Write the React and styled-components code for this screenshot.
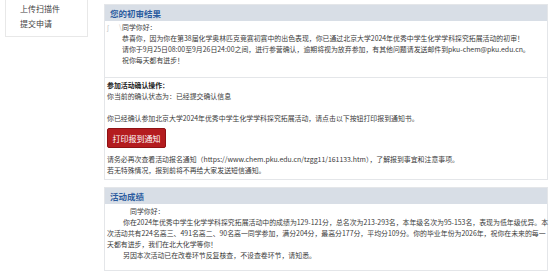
import React from "react";
import styled, { createGlobalStyle } from "styled-components";

const GlobalStyle = createGlobalStyle`
  html, body {
    margin: 0;
    padding: 0;
    background: #ffffff;
  }
  body {
    font-family: "Noto Sans CJK SC", "Noto Sans", sans-serif;
    color: #3a3a3a;
  }
`;

const Page = styled.div`
  display: flex;
  align-items: flex-start;
  width: 550px;
  height: 279px;
  overflow: hidden;
`;

const Sidebar = styled.div`
  width: 81px;
  margin-left: 5px;
  margin-right: 16px;
  padding: 1px 0 5px;
  border: 1px solid #e8e8e8;
  border-top: none;
  background: #fff;
`;

const SideItem = styled.div`
  padding-left: 14px;
  font-size: 8px;
  line-height: 15px;
  color: #444;
`;

const Main = styled.div`
  width: 444px;
  display: flex;
  flex-direction: column;
  gap: 7px;
  padding-top: 4px;
`;

const Panel = styled.div`
  border: 1px solid #e4e6e9;
  background: #fff;
`;

const PanelHeader = styled.div`
  height: 16px;
  line-height: 16px;
  padding-left: 5px;
  background: #d8dee6;
  color: #2c5c9f;
  font-size: 8.5px;
  font-weight: 700;
`;

const Block = styled.div`
  padding: ${(p) => p.$pad || "1px 3px 10px"};
  border-top: ${(p) => (p.$divider ? "1px solid #e4e6e9" : "none")};
  font-size: 6.9px;
  line-height: 11px;
`;

const Line = styled.div`
  white-space: nowrap;
  padding-left: ${(p) => p.$indent || 0}px;
  font-weight: ${(p) => (p.$bold ? 700 : 400)};
  color: ${(p) => (p.$bold ? "#222" : "#3a3a3a")};
  min-height: 11px;
`;

const Faint = styled.span`
  color: #c8c8c8;
  display: inline-block;
  width: ${(p) => p.$w}px;
`;

const PrintButton = styled.button`
  display: block;
  margin: 4px 0 6px;
  width: 59px;
  height: 20px;
  padding: 0;
  border: 1px solid #8f1214;
  border-radius: 2px;
  background: #b41c1f;
  color: #fff;
  font-family: inherit;
  font-size: 8px;
  cursor: pointer;
`;

export default function App() {
  return (
    <>
      <GlobalStyle />
      <Page>
        <Sidebar>
          <SideItem>上传扫描件</SideItem>
          <SideItem>提交申请</SideItem>
        </Sidebar>
        <Main>
          <Panel>
            <PanelHeader>您的初审结果</PanelHeader>
            <Block $pad="1px 2px 11px">
              <Line>
                <Faint $w={12}>ʃ</Faint>
                <Faint $w={3}>\</Faint>同学你好：
              </Line>
              <Line $indent={15}>
                恭喜你，因为你在第38届化学奥林匹克竞赛初赛中的出色表现，你已通过北京大学2024年优秀中学生化学学科探究拓展活动的初审！
              </Line>
              <Line $indent={15}>
                请你于9月25日08:00至9月26日24:00之间，进行参营确认，逾期将视为放弃参加，有其他问题请发送邮件到pku-chem@pku.edu.cn。
              </Line>
              <Line $indent={15}>祝你每天都有进步！</Line>
            </Block>
            <Block $divider $pad="2px 2px 3px">
              <Line $bold>参加活动确认操作：</Line>
              <Line>你当前的确认状态为：已经提交确认信息</Line>
              <Line />
              <Line>
                你已经确认参加北京大学2024年优秀中学生化学学科探究拓展活动，请点击以下按钮打印报到通知书。
              </Line>
              <PrintButton>打印报到通知</PrintButton>
              <Line>
                请务必再次查看活动报名通知（https://www.chem.pku.edu.cn/tzgg11/161133.htm），了解报到事宜和注意事项。
              </Line>
              <Line>若无特殊情况，报到前将不再给大家发送短信通知。</Line>
            </Block>
          </Panel>
          <Panel>
            <PanelHeader>活动成绩</PanelHeader>
            <Block $pad="2px 2px 9px">
              <Line $indent={23}>同学你好：</Line>
              <Line $indent={16}>
                你在2024年优秀中学生化学学科探究拓展活动中的成绩为129-121分，总名次为213-293名，本年级名次为95-153名，表现为低年级优异。本
              </Line>
              <Line>
                次活动共有224名高三、491名高二、90名高一同学参加，满分204分，最高分177分，平均分109分。你的毕业年份为2026年，祝你在未来的每一
              </Line>
              <Line>天都有进步，我们在北大化学等你！</Line>
              <Line $indent={16}>另因本次活动已在改卷环节反复核查，不设查卷环节，请知悉。</Line>
            </Block>
          </Panel>
        </Main>
      </Page>
    </>
  );
}
